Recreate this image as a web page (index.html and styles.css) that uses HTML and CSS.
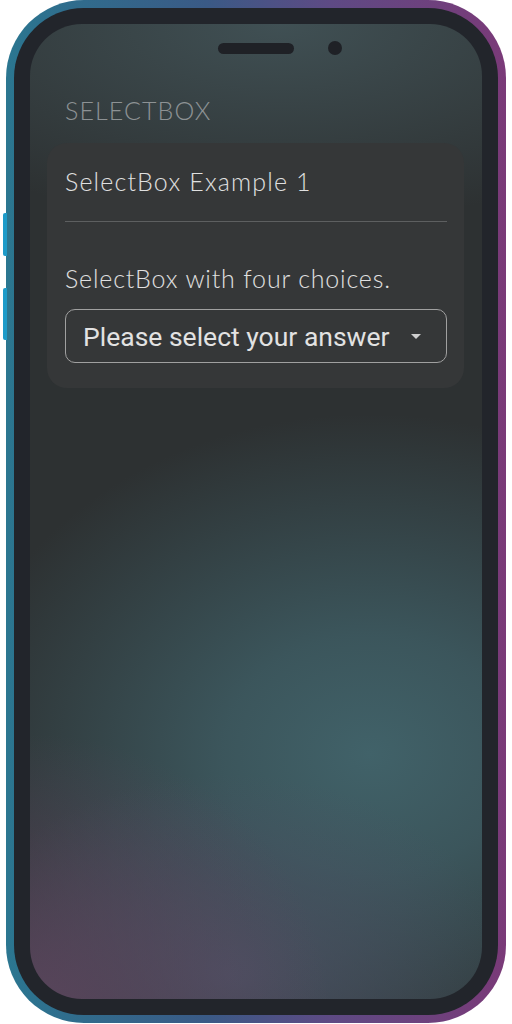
FILE: index.html
```html
<!DOCTYPE html>
<html lang="en">
<head>
<meta charset="utf-8">
<title>SelectBox</title>
<link rel="stylesheet" href="styles.css">
</head>
<body>
<div class="phone">
  <span class="side-btn btn-1"></span>
  <span class="side-btn btn-2"></span>
  <div class="frame">
    <div class="screen">
      <div class="notch">
        <span class="notch-spacer"></span>
        <span class="speaker"></span>
        <span class="camera"></span>
      </div>
      <div class="content">
        <h1 class="section-title">SELECTBOX</h1>
        <div class="card">
          <div class="card-title">SelectBox Example 1</div>
          <div class="divider"></div>
          <div class="question">SelectBox with four choices.</div>
          <div class="select">
            <span class="select-text">Please select your answer</span>
            <svg class="select-arrow" width="10" height="5" viewBox="0 0 10 5"><path d="M0 0 L10 0 L5 5 Z" fill="#cfcfcf"/></svg>
          </div>
        </div>
      </div>
    </div>
  </div>
</div>
</body>
</html>
```

FILE: styles.css
```css
html, body {
  margin: 0;
  padding: 0;
  background: #ffffff;
}

body {
  width: 512px;
  height: 1024px;
  overflow: hidden;
}

.phone {
  position: relative;
  width: 500px;
  height: 1023px;
  margin-left: 6px;
  box-sizing: border-box;
  padding: 8px;
  border-radius: 78px;
  background: linear-gradient(90deg, #2b7690 0%, #3a5a86 40%, #5e4a84 65%, #7a3a78 100%);
}

.side-btn {
  position: absolute;
  left: -3px;
  width: 4px;
  background: #1d9bc9;
  border-radius: 2px 0 0 2px;
}
.btn-1 { top: 213px; height: 43px; }
.btn-2 { top: 288px; height: 52px; }

.frame {
  height: 100%;
  box-sizing: border-box;
  padding: 16px;
  border-radius: 70px;
  background: #22252b;
}

.screen {
  height: 100%;
  border-radius: 52px;
  overflow: hidden;
  background:
    radial-gradient(ellipse 300px 280px at 0px 990px, rgba(92, 70, 94, 0.95), rgba(92, 70, 94, 0) 100%),
    radial-gradient(ellipse 280px 200px at 200px 950px, rgba(78, 82, 102, 0.85), rgba(78, 82, 102, 0) 100%),
    radial-gradient(ellipse 420px 340px at 340px 730px, rgba(65, 98, 105, 1) 0%, rgba(62, 92, 99, 0.85) 35%, rgba(60, 88, 94, 0) 100%),
    radial-gradient(ellipse 460px 200px at 250px 0px, rgba(64, 80, 84, 1), rgba(64, 80, 84, 0) 100%),
    #2d3132;
}

.notch {
  display: flex;
  justify-content: center;
  align-items: center;
  padding-top: 17px;
  height: 14px;
}
.notch-spacer { width: 48px; }
.speaker {
  width: 76px;
  height: 11px;
  border-radius: 6px;
  background: #1f2126;
}
.camera {
  width: 14px;
  height: 14px;
  margin-left: 34px;
  border-radius: 50%;
  background: #1f2126;
}

.content {
  padding: 40px 18px 0 17px;
}

.section-title {
  margin: 0 0 18px 18px;
  font-family: "Lato", "Noto Sans", sans-serif;
  font-weight: 300;
  font-size: 25px;
  line-height: 30px;
  color: #8d9294;
  letter-spacing: 1.1px;
}

.card {
  box-sizing: border-box;
  height: 245px;
  padding: 23px 17px 25px 18px;
  border-radius: 20px;
  background: #353738;
}

.card-title, .question {
  font-family: "Lato", "Noto Sans", sans-serif;
  font-weight: 300;
  font-size: 25px;
  line-height: 30px;
  color: #e0e0e0;
}

.card-title {
  letter-spacing: 1.15px;
}

.divider {
  margin-top: 25px;
  height: 1px;
  background: #5d5f60;
}

.question {
  margin-top: 41px;
  letter-spacing: 0.82px;
}

.select {
  margin-top: 16px;
  box-sizing: border-box;
  height: 54px;
  display: flex;
  align-items: center;
  justify-content: space-between;
  padding: 0 25px 0 17px;
  border: 1px solid #a0a0a0;
  border-radius: 10px;
}

.select-text {
  font-family: "Roboto", "Noto Sans", sans-serif;
  font-size: 26.5px;
  color: #e2e2e2;
}

.select-arrow {
  display: block;
}
```
